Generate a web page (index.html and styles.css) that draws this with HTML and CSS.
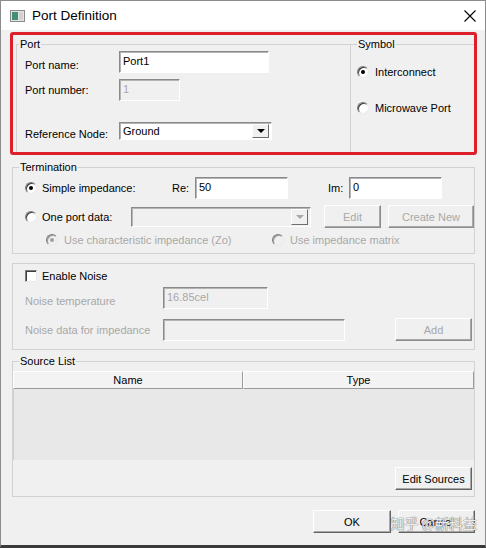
FILE: index.html
```html
<!DOCTYPE html>
<html>
<head>
<meta charset='utf-8'/>
<link rel="stylesheet" href="styles.css">
</head>
<body>
<div class='window'>
  <div class='titlebar'>
    <svg class='app-icon' width='15' height='12' viewBox='0 0 15 12'>
      <rect x='0.5' y='0.5' width='14' height='11' fill='#e4e4e4' stroke='#8a8a8a'/>
      <rect x='2' y='2' width='6' height='8' fill='#3f8f7a'/>
      <rect x='9' y='2' width='4' height='8' fill='#d2d2d2'/>
    </svg>
    <span class='title'>Port Definition</span>
    <svg class='close' width='12' height='12' viewBox='0 0 12 12'>
      <path d='M0.5 0.5 L11.5 11.5 M11.5 0.5 L0.5 11.5' stroke='#000' stroke-width='1.1'/>
    </svg>
  </div>

  <div class='client'>
    <div class='highlight'>
      <fieldset class='group port-group'>
        <legend>Port</legend>
        <div class='row row-name'>
          <span class='field-label low'>Port name:</span>
          <div class='edit edit-port'>Port1</div>
        </div>
        <div class='row row-number'>
          <span class='field-label'>Port number:</span>
          <div class='edit edit-number disabled'>1</div>
        </div>
        <div class='row row-ref'>
          <span class='field-label low'>Reference Node:</span>
          <div class='combo combo-ref'><span class='combo-text'>Ground</span><span class='combo-btn'></span></div>
        </div>
      </fieldset>
      <fieldset class='group symbol-group'>
        <legend>Symbol</legend>
        <div class='option opt-inter'><span class='radio checked'></span>Interconnect</div>
        <div class='option opt-micro'><span class='radio'></span>Microwave Port</div>
      </fieldset>
    </div>

    <fieldset class='group termination'>
      <legend>Termination</legend>
      <div class='row row-simple'>
        <div class='option w-simple'><span class='radio checked'></span>Simple impedance:</div>
        <span class='re-label'>Re:</span>
        <div class='edit edit-imp'>50</div>
        <span class='im-label'>Im:</span>
        <div class='edit edit-imp'>0</div>
      </div>
      <div class='row row-oneport'>
        <div class='option w-oneport'><span class='radio'></span>One port data:</div>
        <div class='combo combo-data disabled'><span class='combo-text'></span><span class='combo-btn'></span></div>
        <button class='btn btn-edit' disabled>Edit</button>
        <button class='btn btn-create' disabled>Create New</button>
      </div>
      <div class='row row-zo'>
        <div class='option disabled w-zo'><span class='radio checked'></span>Use characteristic impedance (Zo)</div>
        <div class='option disabled'><span class='radio'></span>Use impedance matrix</div>
      </div>
    </fieldset>

    <fieldset class='group noise'>
      <div class='row row-check'>
        <span class='checkbox'></span>Enable Noise
      </div>
      <div class='row row-temp'>
        <span class='noise-label low disabled'>Noise temperature</span>
        <div class='edit edit-temp disabled'>16.85cel</div>
      </div>
      <div class='row row-ndata'>
        <span class='noise-label disabled'>Noise data for impedance</span>
        <div class='edit edit-ndata disabled'></div>
        <button class='btn btn-add' disabled>Add</button>
      </div>
    </fieldset>

    <fieldset class='group sources'>
      <legend>Source List</legend>
      <div class='list-head'>
        <span class='col col-name'>Name</span>
        <span class='col col-type'>Type</span>
      </div>
      <div class='list-body'></div>
      <div class='row row-edit-src'>
        <button class='btn btn-sources'>Edit Sources</button>
      </div>
    </fieldset>

    <div class='dialog-buttons'>
      <button class='btn btn-ok'>OK</button>
      <button class='btn btn-cancel'>Cancel</button>
    </div>
  </div>

  <div class='watermark'>知乎 @新料益</div>
</div>
</body>
</html>
```

FILE: styles.css
```css
* {
    box-sizing: border-box;
}
body {
    margin: 0;
    background: #fff;
    font-family: "Liberation Sans", Arial, sans-serif;
    font-size: 11px;
    color: #000;
}
.window {
    position: relative;
    width: 486px;
    height: 548px;
    border: 1px solid #8c8c8c;
    border-bottom: 3px solid #3a3a3a;
    background: #f0f0f0;
    display: flex;
    flex-direction: column;
}
.titlebar {
    flex: none;
    height: 29px;
    background: #fff;
    display: flex;
    align-items: center;
    padding-left: 9px;
    padding-right: 9px;
}
.title {
    margin-left: 7px;
    font-size: 13.5px;
    color: #000;
}
.close {
    margin-left: auto;
}
.client {
    flex: 1;
    padding: 2px 8px 0 9px;
}

/* red marker round the first block */
.highlight {
    height: 123px;
    border: 3px solid #dc1f2b;
    border-radius: 3px;
    padding-top: 2px;
    display: flex;
}

fieldset.group {
    margin: 0;
    padding: 0;
    min-width: 0;
    border: 1px solid #d2d2d2;
}
fieldset.group legend {
    padding: 0 1px;
    margin-left: 6px;
    line-height: 14px;
    font-size: 11px;
}
.row {
    display: flex;
    align-items: center;
}
.disabled {
    color: #a8a8a8;
}
.low {
    padding-top: 5px;
}

/* port */
.port-group {
    width: 334px;
    margin-left: 3px !important;
    border-right: none !important;
    border-bottom: none !important;
}
.port-group legend {
    margin-left: 2px !important;
}
.port-group .row {
    padding-left: 8px;
}
.field-label {
    width: 94px;
    flex: none;
}
.row-name {
    height: 22px;
}
.row-number {
    height: 22px;
    margin-top: 6px;
}
.row-ref {
    height: 18px;
    margin-top: 21px;
}
.edit {
    height: 22px;
    background: #fff;
    border: 1px solid;
    border-color: #8a8a8a #fff #fff #8a8a8a;
    box-shadow: inset 1px 1px 0 #b4b4b4;
    padding: 3px 0 0 3px;
    line-height: 13px;
}
.edit.disabled {
    background: #f0f0f0;
}
.edit-port {
    width: 150px;
}
.edit-number {
    width: 61px;
}
.combo {
    display: flex;
    height: 18px;
    background: #fff;
    border: 1px solid;
    border-color: #8a8a8a #fff #fff #8a8a8a;
    box-shadow: inset 1px 1px 0 #b4b4b4;
    padding: 1px 2px 1px 3px;
}
.combo.disabled {
    background: #f0f0f0;
}
.combo-text {
    flex: 1;
    line-height: 14px;
}
.combo-btn {
    width: 17px;
    border: 1px solid;
    border-color: #fff #6e6e6e #6e6e6e #fff;
    background: #f0f0f0;
    display: flex;
    align-items: center;
    justify-content: center;
}
.combo-btn::after {
    content: '';
    border-left: 4px solid transparent;
    border-right: 4px solid transparent;
    border-top: 4px solid #000;
}
.combo.disabled .combo-btn::after {
    border-top-color: #a8a8a8;
}
.combo-ref {
    width: 153px;
}

/* symbol */
.symbol-group {
    flex: 1;
    border-right: none !important;
    border-bottom: none !important;
}
.option {
    display: flex;
    align-items: center;
    gap: 6px;
    line-height: 14px;
}
.symbol-group .option {
    padding-left: 6px;
}
.opt-inter {
    margin-top: 14px;
}
.opt-micro {
    margin-top: 22px;
}
.radio {
    flex: none;
    width: 12px;
    height: 12px;
    border-radius: 50%;
    background: #fff;
    border: 1px solid;
    border-color: #7c7c7c #eaeaea #eaeaea #7c7c7c;
    box-shadow: inset 1px 1px 0 #3c3c3c;
    display: flex;
    align-items: center;
    justify-content: center;
}
.radio.checked::after {
    content: '';
    width: 4px;
    height: 4px;
    border-radius: 50%;
    background: #000;
}
.option.disabled .radio {
    background: #f0f0f0;
    box-shadow: inset 1px 1px 0 #9a9a9a;
}
.option.disabled .radio.checked::after {
    background: #a0a0a0;
}

/* termination */
.termination {
    margin: 5px 2px 0 !important;
    padding-bottom: 6px !important;
}
.row-simple {
    height: 22px;
    margin-top: 3px;
    padding-left: 12px;
}
.w-simple {
    width: 147px;
    gap: 5px;
}
.re-label {
    width: 23px;
}
.im-label {
    width: 21px;
    margin-left: 40px;
}
.edit-imp {
    width: 93px;
}
.row-oneport {
    height: 23px;
    margin-top: 6px;
    padding-left: 12px;
}
.w-oneport {
    width: 106px;
    gap: 5px;
}
.combo-data {
    width: 180px;
    height: 20px;
}
.btn {
    height: 23px;
    padding: 0;
    background: #f0f0f0;
    font-family: "Liberation Sans", Arial, sans-serif;
    font-size: 11px;
    color: #000;
    border: 1px solid;
    border-color: #fff #646464 #646464 #fff;
    box-shadow: inset -1px -1px 0 #a8a8a8;
}
.btn:disabled {
    color: #a8a8a8;
    border-color: #fff #8c8c8c #8c8c8c #fff;
}
.btn-edit {
    width: 57px;
    margin-left: 13px;
}
.btn-create {
    width: 86px;
    margin-left: 7px;
}
.row-zo {
    height: 14px;
    margin-top: 5px;
    padding-left: 33px;
}
.w-zo {
    width: 226px;
}

/* noise */
.noise {
    margin: 9px 2px 0 !important;
    padding: 5px 0 8px !important;
}
.row-check {
    height: 14px;
    padding-left: 12px;
    gap: 5px;
}
.checkbox {
    width: 12px;
    height: 12px;
    background: #fff;
    border: 1px solid;
    border-color: #7c7c7c #eaeaea #eaeaea #7c7c7c;
    box-shadow: inset 1px 1px 0 #3c3c3c;
}
.row-temp {
    height: 22px;
    margin-top: 4px;
    padding-left: 12px;
}
.row-ndata {
    height: 23px;
    margin-top: 9px;
    padding-left: 12px;
}
.noise-label {
    width: 138px;
}
.edit-temp {
    width: 105px;
}
.edit-ndata {
    width: 182px;
}
.btn-add {
    width: 77px;
    margin-left: auto;
    margin-right: 2px;
}

/* source list */
.sources {
    margin: 4px 2px 0 !important;
    padding-bottom: 6px !important;
}
.list-head {
    display: flex;
    height: 18px;
    margin-top: 3px;
}
.col {
    display: flex;
    align-items: center;
    justify-content: center;
    background: #f3f3f3;
    border: 1px solid;
    border-color: #fff #9a9a9a #9a9a9a #fff;
}
.col-name {
    width: 230px;
}
.col-type {
    flex: 1;
}
.list-body {
    height: 71px;
    background: #e8e8e8;
    border-left: 1px solid #cfcfcf;
}
.row-edit-src {
    justify-content: flex-end;
    margin-top: 7px;
}
.btn-sources {
    width: 77px;
    margin-right: 2px;
}

.dialog-buttons {
    display: flex;
    justify-content: flex-end;
    gap: 7px;
    margin-top: 13px;
    padding-right: 2px;
}
.btn-ok {
    width: 78px;
}
.btn-cancel {
    width: 77px;
}

.watermark {
    position: absolute;
    right: 8px;
    bottom: 13px;
    font-family: "Noto Sans CJK SC", sans-serif;
    font-size: 14px;
    line-height: 18px;
    color: rgba(255, 255, 255, 0.9);
    text-shadow: 0 0 1px #666, 0 0 1px #666;
}
```
